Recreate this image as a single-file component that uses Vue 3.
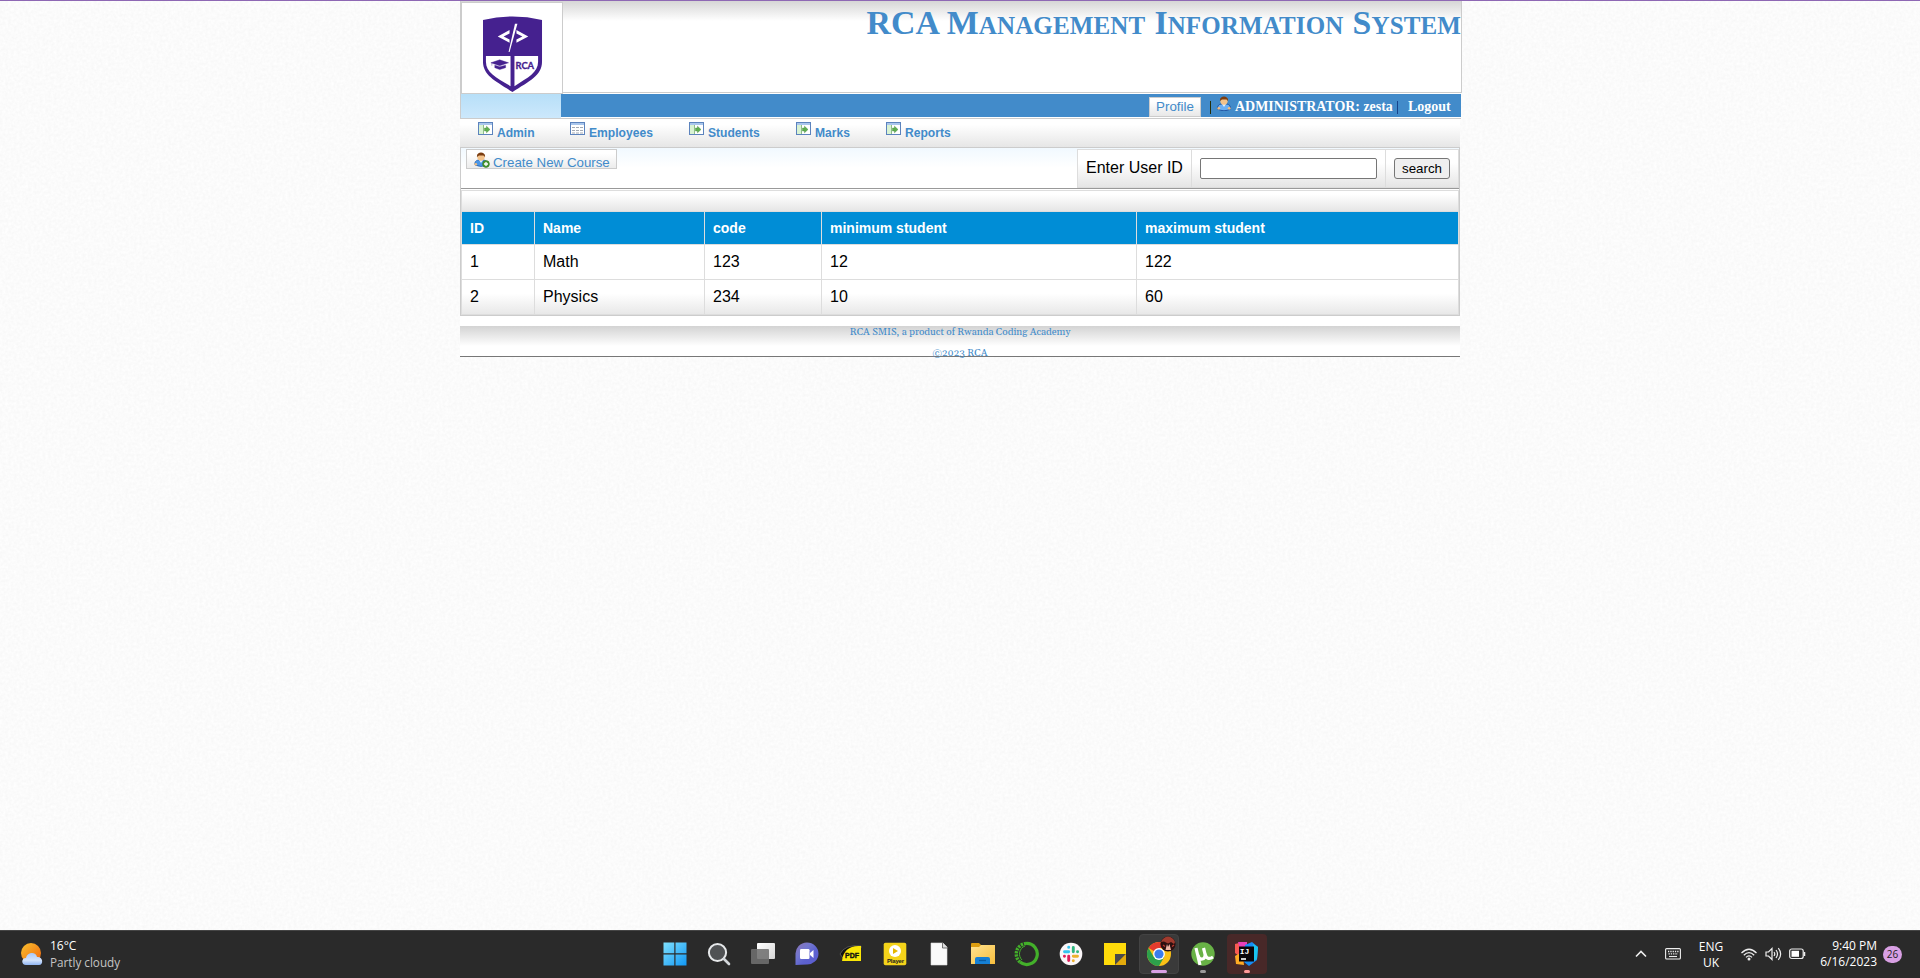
<script setup>
const menu = [
  { label: 'Admin', kind: 'go', cls: 'm1' },
  { label: 'Employees', kind: 'grid', cls: 'm2' },
  { label: 'Students', kind: 'go', cls: 'm3' },
  { label: 'Marks', kind: 'go', cls: 'm4' },
  { label: 'Reports', kind: 'go', cls: 'm5' },
]
const columns = ['ID', 'Name', 'code', 'minimum student', 'maximum student']
const rows = [
  ['1', 'Math', '123', '12', '122'],
  ['2', 'Physics', '234', '10', '60'],
]
</script>

<template>
  <div class="screen">
    <svg class="paper" width="1920" height="930">
      <filter id="grain" x="0" y="0" width="100%" height="100%" color-interpolation-filters="sRGB">
        <feTurbulence type="fractalNoise" baseFrequency="0.35" numOctaves="2" seed="4" />
        <feColorMatrix values="0.04 0 0 0 0.964  0.04 0 0 0 0.964  0.04 0 0 0 0.964  0 0 0 0 1" />
      </filter>
      <rect width="1920" height="930" filter="url(#grain)" />
    </svg>
    <div class="topline"></div>

    <main class="page">
      <header class="head">
        <div class="logo">
          <svg width="61" height="78" viewBox="0 0 62 80" preserveAspectRatio="none">
            <path d="M1 5Q31-2 61 5V48C61 62 48 68 31 79C14 68 1 62 1 48Z" fill="#45218f" />
            <path d="M4 42H29V73C14 64 4 59 4 48ZM33 42H57V48C57 59 47 64 33 73Z" fill="#fff" />
            <path d="M16 22L28 15.500V19L22 22L28 25V28.500ZM47 22L35 15.500V19L41 22L35 25V28.500Z" fill="#fff" />
            <path d="M33.500 9H36L28 38H27Z" fill="#fff" />
            <path d="M9 49L18 46L27 49L18 52ZM13 51.500L18 53L24 51.500V54L18 56L13 54ZM10 49V52" fill="#45218f" stroke="#45218f" stroke-width=".4" />
            <text x="34" y="55" class="logotext" textLength="19" lengthAdjust="spacingAndGlyphs">RCA</text>
          </svg>
        </div>
        <h1><span>RCA M</span>anagement <span>I</span>nformation <span>S</span>ystem</h1>
      </header>

      <div class="bar">
        <div class="pale"></div>
        <div class="blue">
          <a class="profile">Profile</a>
          <span class="sep s1"></span>
          <svg class="user" width="14" height="15" viewBox="0 0 14 15">
            <path d="M.5 13Q0 9 4 8H10Q14 9 13.500 13Q7 16.500 .5 13Z" fill="#6cb0f5" stroke="#1d4f9c" stroke-width=".9" />
            <path d="M5 8L7 11L9 8Z" fill="#e4f0ff" />
            <circle cx="1.800" cy="12.300" r="1.400" fill="#efbd83" /><circle cx="12.200" cy="12.300" r="1.400" fill="#efbd83" />
            <circle cx="7" cy="5" r="3.700" fill="#f3c38c" />
            <path d="M3 5C2-1 12-1 11 5L9.500 3.500H5Z" fill="#7b3d10" />
          </svg>
          <b class="who">ADMINISTRATOR: zesta</b>
          <span class="sep s2"></span>
          <b class="out">Logout</b>
        </div>
      </div>

      <nav class="menu">
        <a v-for="m in menu" :key="m.label" :class="m.cls">
          <svg width="16" height="14" viewBox="0 0 16 14">
            <rect x=".5" y=".5" width="14" height="12" fill="#fff" stroke="#5c83bd" />
            <rect x="1" y="1" width="13" height="2" fill="#a9c6ec" />
            <template v-if="m.kind === 'go'">
              <rect x="1" y="3" width="4" height="9" fill="#d9f3d3" />
              <path d="M5.500 3V12" stroke="#8fbf8a" />
              <path d="M6.500 6H8.500V4.200L12 7.500L8.500 10.800V9H6.500Z" fill="#5fae50" stroke="#3f8a35" stroke-width=".4" />
            </template>
            <path v-else d="M2 5.500H13M2 8.500H13M2 11H13" stroke="#a3a9b3" stroke-dasharray="3 1" />
          </svg>
          <span>{{ m.label }}</span>
        </a>
      </nav>

      <section class="body">
        <div class="tools">
          <a class="create">
            <svg width="16" height="16" viewBox="0 0 16 16">
              <path d="M1 13Q0 9 4 8H10Q14 9 13 13Q7 16 1 13Z" fill="#4b96e6" stroke="#235da8" stroke-width=".7" />
              <path d="M5 8L7 11L9 8Z" fill="#e4f0ff" />
              <circle cx="1.800" cy="12.300" r="1.300" fill="#efbd83" />
              <circle cx="7" cy="5" r="3.700" fill="#f3c38c" />
              <path d="M3 5C2-1 12-1 11 5L9.500 3.500H5Z" fill="#7b3d10" />
              <circle cx="12" cy="12" r="3.400" fill="#4b9a34" stroke="#2d701f" stroke-width=".6" />
              <path d="M10 12H14M12 10V14" stroke="#fff" stroke-width="1.300" />
            </svg>
            <span>Create New Course</span>
          </a>
          <div class="search">
            <label>Enter User ID</label>
            <div class="field"><input type="text" /></div>
            <div class="go"><button>search</button></div>
          </div>
        </div>
        <div class="gridbox">
          <div class="strip"></div>
          <div class="row th"><div v-for="c in columns" :key="c">{{ c }}</div></div>
          <div v-for="(r, i) in rows" :key="i" class="row" :class="{ last: i === rows.length - 1 }">
            <div v-for="c in r" :key="c">{{ c }}</div>
          </div>
        </div>
      </section>

      <footer class="foot">
        <p>RCA SMIS, a product of Rwanda Coding Academy</p>
        <p class="copy">©2023 RCA</p>
      </footer>
    </main>

    <div class="taskbar">
      <div class="weather">
        <svg width="24" height="24" viewBox="0 0 24 24">
          <defs><linearGradient id="sun" x1="0" y1="0" x2="1" y2="1"><stop stop-color="#f9c22e" /><stop offset="1" stop-color="#f0640f" /></linearGradient>
            <linearGradient id="cloud" x1="0" y1="0" x2="0" y2="1"><stop stop-color="#a9c8fa" /><stop offset=".6" stop-color="#d3e3fc" /><stop offset="1" stop-color="#8fb4f2" /></linearGradient></defs>
          <circle cx="11" cy="11" r="10" fill="url(#sun)" />
          <path d="M6 23C1 23 1 16 6 16C7 10 16 9 17 15C23 14 24 23 19 23Z" fill="url(#cloud)" />
        </svg>
        <div><p>16°C</p><p class="dim">Partly cloudy</p></div>
      </div>

      <div class="apps">
        <div class="app">
          <svg width="24" height="24" viewBox="0 0 24 24"><defs><linearGradient id="win" x1="0" y1="0" x2="1" y2="1"><stop stop-color="#7fe0fd" /><stop offset="1" stop-color="#1097f5" /></linearGradient></defs>
            <path d="M.5 .5H11.300V11.300H.5ZM12.500 .5H23.500V11.300H12.500ZM.5 12.500H11.300V23.500H.5ZM12.500 12.500H23.500V23.500H12.500Z" fill="url(#win)" /></svg>
        </div>
        <div class="app">
          <svg width="24" height="24" viewBox="0 0 24 24"><circle cx="10.500" cy="10.500" r="8.600" fill="#505254" stroke="#e6e8ea" stroke-width="2" /><path d="M17 17L22 22" stroke="#d2d6da" stroke-width="2.600" stroke-linecap="round" /></svg>
        </div>
        <div class="app">
          <svg width="26" height="24" viewBox="0 0 26 24"><defs><linearGradient id="tv" x1="0" y1="0" x2="1" y2="1"><stop stop-color="#fff" /><stop offset="1" stop-color="#d5d5d5" /></linearGradient></defs>
            <rect x="7" y="1" width="18" height="16" rx="1" fill="url(#tv)" /><rect x="1" y="7" width="18" height="15" rx="1" fill="#707070" opacity=".88" /></svg>
        </div>
        <div class="app">
          <svg width="24" height="24" viewBox="0 0 24 24"><defs><linearGradient id="chat" x1="0" y1="0" x2="1" y2="1"><stop stop-color="#8a72b4" /><stop offset=".35" stop-color="#7377cf" /><stop offset=".6" stop-color="#5d62cf" /><stop offset="1" stop-color="#5a5bd0" /></linearGradient></defs>
            <path d="M.5 23V12A11.500 11 0 1 1 11.500 22.500Z" fill="url(#chat)" /><rect x="5" y="7" width="9.500" height="10" rx="1.200" fill="#fff" /><path d="M15 11L18.500 8V16L15 13Z" fill="#fff" /></svg>
        </div>
        <div class="app">
          <svg width="24" height="24" viewBox="0 0 24 24"><path d="M1 12Q6 2 22 4V6Q8 5 4 16Z" fill="#111" stroke="#777" stroke-width=".6" /><path d="M3 19C4 8 11 3 22 4V19Z" fill="#fae607" /><text x="6" y="16" textLength="14" lengthAdjust="spacingAndGlyphs" class="pdf">PDF</text></svg>
        </div>
        <div class="app">
          <svg width="24" height="24" viewBox="0 0 24 24"><rect x=".7" y=".7" width="22.600" height="22.600" rx="1.800" fill="#f4d31a" /><circle cx="12" cy="9" r="6" fill="#fff" /><path d="M10 6L15 9L10 12Z" fill="#e5b700" /><text x="4" y="21" textLength="17" class="player">Player</text></svg>
        </div>
        <div class="app">
          <svg width="24" height="24" viewBox="0 0 24 24"><path d="M4 1H16L20 5V23H4Z" fill="#fafafa" stroke="#ddd" stroke-width=".6" /><path d="M15.500 1V6H20.500" fill="#ddd" stroke="#555" stroke-width=".8" /></svg>
        </div>
        <div class="app">
          <svg width="26" height="24" viewBox="0 0 26 24"><defs><linearGradient id="fold" x1="0" y1="0" x2="1" y2="1"><stop stop-color="#ffe391" /><stop offset="1" stop-color="#f8be3c" /></linearGradient></defs>
            <path d="M1 2Q1 1 2 1H9L11 3H15V8H1Z" fill="#dc9d10" /><path d="M1 5H9L11 3H25V22H1Z" fill="url(#fold)" /><path d="M5 22V17Q5 15 7 15H18Q20 15 20 17V22Z" fill="#1680d5" /><path d="M9 18.500H16" stroke="#095ba2" stroke-width="1.300" /></svg>
        </div>
        <div class="app">
          <svg width="26" height="26" viewBox="0 0 26 26"><path d="M12 2.500A10.500 10.500 0 1 1 6 21" fill="none" stroke="#43b02a" stroke-width="3.200" /><path d="M6 21A10.500 10.500 0 0 1 12 2.500" fill="none" stroke="#43b02a" stroke-width="3.400" stroke-dasharray="2.200 1" /><path d="M8 19A8.500 8.500 0 0 1 11 5" fill="none" stroke="#43b02a" stroke-width="1" /></svg>
        </div>
        <div class="app">
          <svg width="24" height="24" viewBox="0 0 24 24"><circle cx="12" cy="12" r="11.300" fill="#fbf7f9" />
            <g fill="none" stroke-width="2.900" stroke-linecap="round"><path d="M5.500 9.700H9.700M9.700 5.300V5.400" stroke="#36c5f0" /><path d="M14.300 5.500V9.700M18.500 9.700H18.600" stroke="#2eb67d" /><path d="M14.300 14.300H18.500M14.300 18.600V18.700" stroke="#ecb22e" /><path d="M9.700 14.300V18.500M5.400 14.300H5.500" stroke="#e01e5a" /></g></svg>
        </div>
        <div class="app">
          <svg width="24" height="24" viewBox="0 0 24 24"><path d="M1 1H23V12L12 23H1Z" fill="#ffdb0a" /><path d="M12 23V12H23Z" fill="#4a4a4a" /><path d="M12 23L23 12V23Z" fill="#e3aa0c" /></svg>
        </div>
        <div class="app active">
          <svg width="30" height="32" viewBox="0 0 30 32"><g transform="translate(0 4)"><circle cx="13" cy="15" r="12" fill="#fbc116" /><path d="M13 15L2.600 9A12 12 0 0 1 23.400 9H13Z" fill="#e33b2e" /><path d="M2.600 9A12 12 0 0 0 13 27L18.200 18L13 15L7.800 18Z" fill="#2da04b" /><circle cx="13" cy="15" r="5.900" fill="#fff" /><circle cx="13" cy="15" r="4.600" fill="#3b7ded" /></g>
            <circle cx="22" cy="9" r="7.600" fill="#2c1010" /><path d="M15 7Q17 2 22 1.500Q27 2 29 7L28 9L25 7L22 8.500L18 6.500Z" fill="#a13b2e" /><path d="M19.500 15L21 9L22 12L23.500 9L25 15Z" fill="#f0b7a7" /><path d="M17 10L19 11.500M26 11.500L28 10" stroke="#c33b30" stroke-width="1.200" /></svg>
          <i class="wide"></i>
        </div>
        <div class="app">
          <svg width="24" height="24" viewBox="0 0 24 24"><circle cx="12" cy="12" r="11.700" fill="#68b246" /><path d="M5 6L9 23M7 13C8 19 15 18 14 12L12.500 6M14 12Q16 19 22 15" fill="none" stroke="#fff" stroke-width="3.200" /></svg>
          <i class="grey"></i>
        </div>
        <div class="app hot">
          <svg width="24" height="24" viewBox="0 0 24 24"><path d="M0 2L8 0L12 6L8 22L1 21L4 14L0 11Z" fill="#fa5a52" /><path d="M0 14L7 10L9 23L1 22Z" fill="#ffab24" /><path d="M3 0H12V6H5Z" fill="#e940b9" /><path d="M10 3L17 0L23 5L22 18L14 24L9 20Z" fill="#168df5" /><path d="M18 2L23 5L22 17L19 19Z" fill="#19c4ef" /><rect x="4" y="4.500" width="15" height="15" fill="#09060a" /><text x="4.800" y="12" class="ij">IJ</text><path d="M6 17H11" stroke="#fff" stroke-width="1.600" /></svg>
          <i class="pink"></i>
        </div>
      </div>

      <div class="tray">
        <svg class="chev" width="12" height="8" viewBox="0 0 12 8"><path d="M1 6.500L6 1.500L11 6.500" fill="none" stroke="#eee" stroke-width="1.600" /></svg>
        <svg class="kbd" width="16" height="12" viewBox="0 0 16 12"><rect x=".6" y=".6" width="14.800" height="10.400" rx="1" fill="none" stroke="#eee" stroke-width="1.100" /><path d="M3 3.500H14M3.500 5.800H13" stroke="#eee" stroke-width="1.300" stroke-dasharray="1.300 1" /><path d="M4 8.500H12" stroke="#eee" stroke-width="1.100" /></svg>
        <div class="lang"><p>ENG</p><p>UK</p></div>
        <svg class="wifi" width="16" height="13" viewBox="0 0 16 13"><g fill="none" stroke="#eee" stroke-width="1.300"><path d="M.5 5Q8-2.500 15.500 5M2.800 7.200Q8 2 13.200 7.200M5 9.400Q8 6.400 11 9.400" /></g><circle cx="8" cy="11" r="1.500" fill="#eee" /></svg>
        <svg class="vol" width="17" height="14" viewBox="0 0 17 14"><g fill="none" stroke="#eee" stroke-width="1.200"><path d="M1 5H3.500L7 1.500V12.500L3.500 9H1Z" /><path d="M9 5Q10.500 7 9 9M11 3Q14 7 11 11M13.300 1.200Q18 7 13.300 12.800" /></g></svg>
        <svg class="bat" width="17" height="12" viewBox="0 0 17 12"><rect x=".7" y="1" width="13.500" height="9.500" rx="2" fill="none" stroke="#eee" stroke-width="1.200" /><rect x="2.500" y="2.800" width="7.500" height="6" fill="#fff" /><path d="M15.500 4V8" stroke="#eee" stroke-width="1.500" /></svg>
        <div class="clock"><p>9:40 PM</p><p>6/16/2023</p></div>
        <span class="badge">26</span>
      </div>
    </div>
  </div>
</template>

<style>
html, body { margin: 0; overflow: hidden; }
</style>

<style scoped>
* { box-sizing: border-box; }
p { margin: 0; }
svg { display: block; flex: none; }
.screen { position: relative; width: 1920px; height: 978px; display: flex; flex-direction: column; background: #fafafa; overflow: hidden; font-family: "Liberation Sans", Arial, sans-serif; white-space: nowrap; }
.paper { position: absolute; left: 0; top: 0; }
.topline { position: relative; height: 1px; background: #8e68b4; }
.page { position: relative; width: 1000px; margin-left: 460px; height: 356px; background: #fff; display: flex; flex-direction: column; }
.head { width: 1002px; height: 92px; display: flex; justify-content: space-between; border: 1px solid #ccc; border-top: 0; background: linear-gradient(#d6d6d6, #fff 20px); }
.logo { width: 102px; height: 92px; margin-top: 1px; margin-bottom: -2px; background: #fff; border: 1px solid #ccc; padding: 12px 0 0 20px; position: relative; }
.logotext { font: bold 9.500px Lato, sans-serif; fill: #45218f; stroke: #45218f; stroke-width: .3px; }
h1 { margin: 3px 0 0; height: 40px; font: bold 36.200px/36px "Liberation Serif", "Times New Roman", serif; font-variant: small-caps; letter-spacing: .12px; color: #428bca; }
h1 span { font-size: 33.800px; }
.bar { width: 1001px; height: 26px; padding-top: 1px; display: flex; border-left: 1px solid #ccc; border-bottom: 1px solid #ccc; }
.pale { width: 100px; height: 24px; background: linear-gradient(#b7dff8, #cce8fc); }
.blue { width: 900px; height: 23px; background: #428bca; display: flex; align-items: flex-start; }
.profile { margin: 3px 0 0 588px; width: 52px; height: 20px; border: 1px solid #ccc; background: linear-gradient(#fff 20%, #e8e8e8); font-size: 13.330px; line-height: 18px; text-align: center; color: #428bca; }
.sep { width: 1px; height: 13px; margin-top: 7px; background: #252e08; }
.s1 { margin-left: 9px; }
.user { margin: 2px 0 0 6px; }
.who { margin-left: 4px; width: 159px; font: bold 13.950px/26px "Liberation Serif", serif; color: #fff; }
.s2 { margin-left: 3px; background: #17438a; }
.out { margin-left: 10px; font: bold 14px/26px "Liberation Serif", serif; color: #fff; }
.menu { height: 29px; display: flex; border-bottom: 1px solid #ccc; background: linear-gradient(#fff 20%, #e6e6e6); padding-left: 18px; }
.menu a { display: flex; gap: 3px; padding-top: 3px; font: bold 12.100px/22px "Liberation Sans", sans-serif; color: #428bca; }
.m1 { width: 92px; } .m2 { width: 119px; } .m3 { width: 107px; } .m4 { width: 90px; }
.body { height: 168px; border: 1px solid #ccc; border-top: 0; }
.tools { height: 41px; display: flex; justify-content: space-between; padding: 1px 0 0 5px; border-bottom: 1px solid #999; background: linear-gradient(#f1f9ff, #fff 20px); }
.create { width: 151px; height: 20px; display: flex; gap: 3px; padding: 2px 0 0 7px; border: 1px solid #ccc; background: linear-gradient(#fff 20%, #ececec); color: #428bca; font-size: 13.300px; line-height: 22px; }
.search { height: 39px; display: flex; border: 1px solid #ddd; background: linear-gradient(#fff 35%, #e5e5e5); }
.search label { width: 113px; padding-left: 8px; font-size: 16px; line-height: 35px; }
.field { width: 194px; border-left: 1px solid #ddd; padding: 8px; }
.field input { display: block; width: 177px; height: 21px; border: 1px solid #767676; border-radius: 2px; background: #fff; }
.go { width: 73px; border-left: 1px solid #ddd; padding: 8px; }
.go button { width: 56px; height: 21px; padding: 0; border: 1px solid #767676; border-radius: 3px; background: #efefef; font: 13.333px/19px "Liberation Sans", sans-serif; color: #000; }
.gridbox { margin-top: 1px; height: 125px; border: 1px solid #ddd; background: #fff; }
.strip { height: 21px; border-bottom: 1px solid #ddd; background: linear-gradient(#fff 15%, #e6e6e6); }
.row { display: grid; grid-template-columns: 72px 170px 117px 315px 1fr; height: 35px; font-size: 16px; line-height: 34px; border-bottom: 1px solid #ddd; }
.row > div { padding-left: 8px; border-left: 1px solid #ddd; }
.row > div:first-child { border-left: 0; }
.th { height: 33px; background: #008dd6; color: #fff; font-size: 14px; font-weight: bold; line-height: 33px; }
.last { border: 0; height: 34px; background: linear-gradient(#fff 40%, #e8e8e8); }
.foot { margin-top: 10px; height: 31px; border-bottom: 1px solid #777; background: linear-gradient(#d3d3d3, #fff 20px); text-align: center; color: #428bca; font: 10px/12px Gelasio, Georgia, "Liberation Serif", serif; }
.copy { margin-top: 9px; }

.taskbar { position: absolute; left: 0; bottom: 0; width: 1920px; height: 48px; background: #2a2a2a; border-top: 1px solid #454545; color: #fff; font: 12px/16px "Open Sans", sans-serif; }
.weather { position: absolute; left: 20px; top: 7px; display: flex; gap: 6px; }
.weather svg { margin-top: 4px; }
.dim { color: #c5c5c5; font-size: 11.700px; }
.apps { position: absolute; left: 655px; top: 3px; display: flex; gap: 4px; }
.app { width: 40px; height: 40px; display: flex; align-items: center; justify-content: center; position: relative; border-radius: 4px; }
.active { background: #3a3a3a; border: 1px solid #434343; }
.active > svg { margin-top: -6px; margin-left: 4px; }
.hot { background: #482828; }
.app i { position: absolute; bottom: 1px; left: 17px; width: 6px; height: 3px; border-radius: 2px; }
.app .wide { left: 11px; bottom: 0; width: 16px; background: #d9a0e4; }
.grey { background: #9a9a9a; }
.pink { background: #ff9a9a; }
.pdf { font: bold 8px "Liberation Sans", sans-serif; fill: #111; stroke: #111; stroke-width: .4px; }
.player { font: bold 6px "Liberation Sans", sans-serif; fill: #222; }
.ij { font: bold 8px "Liberation Mono", monospace; fill: #fff; }
.tray { position: absolute; left: 1635px; top: 0; height: 46px; display: flex; align-items: center; }
.kbd { margin-left: 18px; }
.lang { margin-left: 16px; width: 28px; text-align: center; padding-top: 1px; }
.wifi { margin-left: 16px; }
.vol { margin-left: 8px; }
.bat { margin-left: 7px; }
.clock { width: 71px; text-align: right; }
.badge { margin-left: 6px; width: 19px; height: 17px; border-radius: 9px; background: #d9a0e4; color: #222; font-size: 10px; line-height: 17px; text-align: center; }
</style>
